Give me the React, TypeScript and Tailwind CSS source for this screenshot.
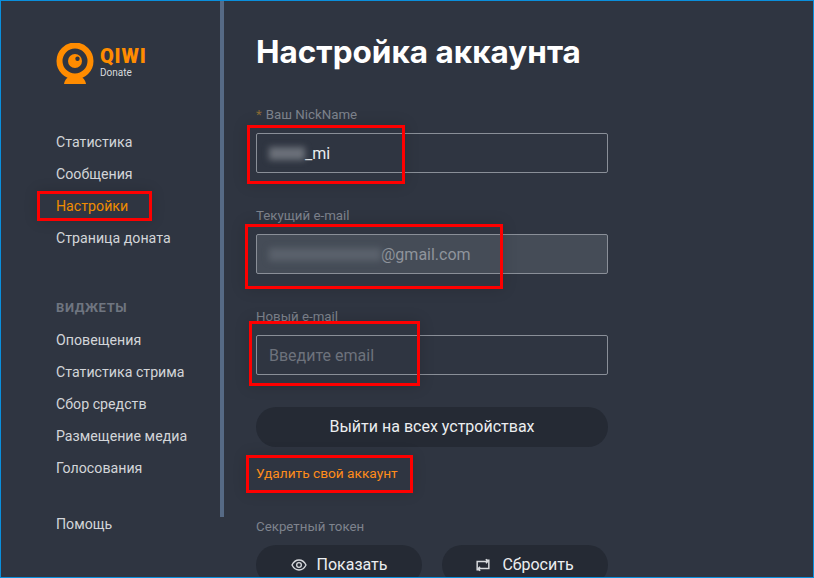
import React from "react";

const NavItem = ({ label, active }: { label: string; active?: boolean }) => (
  <div className={`h-8 flex items-center text-[14.200px] font-normal ${active ? "text-[#f08c00]" : "text-[#d3d5d9]"}`}>{label}</div>
);

const Field = ({ label, children, className }: { label: React.ReactNode; children: React.ReactNode; className?: string }) => (
  <div className={className}>
    <div className="h-5 mb-[9px] pt-px flex items-center text-[13.300px] font-normal text-[#7e838d]">{label}</div>
    {children}
  </div>
);

const Annot = ({ className }: { className: string }) => (
  <div className={`absolute border-[3px] border-[#fe0000] shadow-[0_0_14px_rgba(0,0,0,0.15)] ${className}`} />
);

const Pill = ({ children, className }: { children: React.ReactNode; className: string }) => (
  <div className={`h-10 rounded-[20px] bg-[#252a34] flex items-center justify-center text-[16px] text-[#eceef0] ${className}`}>{children}</div>
);

export default function App() {
  return (
    <div className="relative w-[814px] h-[578px] overflow-hidden bg-[#2f3541] border border-[#0a8fdc] flex font-['Roboto','Noto_Sans',sans-serif]">
      <aside className="w-[219px] shrink-0 pl-[55px] flex flex-col">
        <div className="mt-[42px] flex items-start h-[41px]">
          <svg width="38" height="41" viewBox="0 0 38 41" className="shrink-0">
            <path d="M8 41 C9 35 13 33 19 33 C25 33 29 35 30 41 Z" fill="#ff8c00" />
            <circle cx="19" cy="18" r="15.500" fill="none" stroke="#ff8c00" strokeWidth="6" />
            <circle cx="19" cy="18" r="7" fill="#ff8c00" />
            <circle cx="21.500" cy="15.800" r="2.200" fill="#2f3541" />
          </svg>
          <div className="ml-[6px] flex flex-col">
            <span className="text-[20px] leading-[17px] mt-[5px] font-black tracking-[0.8px] text-[#ff8c00]">QIWI</span>
            <span className="text-[10px] leading-[11px] mt-[2px] text-[#d8dade]">Donate</span>
          </div>
        </div>
        <nav className="mt-[43px] flex flex-col">
          <NavItem label="Статистика" />
          <NavItem label="Сообщения" />
          <NavItem label="Настройки" active />
          <NavItem label="Страница доната" />
        </nav>
        <div className="mt-[37px] h-8 flex items-center text-[13px] font-bold tracking-[0.6px] text-[#6f7580]">ВИДЖЕТЫ</div>
        <nav className="mt-px flex flex-col">
          <NavItem label="Оповещения" />
          <NavItem label="Статистика стрима" />
          <NavItem label="Сбор средств" />
          <NavItem label="Размещение медиа" />
          <NavItem label="Голосования" />
        </nav>
        <div className="mt-6">
          <NavItem label="Помощь" />
        </div>
      </aside>
      <div className="w-1 h-[516px] shrink-0 bg-[#566a85]" />
      <main className="ml-[32px] w-[352px] shrink-0">
        <h1 className="mt-[30px] h-[41px] flex items-center font-['Inter',sans-serif] text-[31.500px] font-bold text-white whitespace-nowrap">Настройка аккаунта</h1>
        <Field className="mt-[32px]" label={<><span className="text-[#8a6a35] mr-1">*</span>Ваш NickName</>}>
          <div className="h-10 border border-[#8a8f98] rounded-[2px] flex items-center px-3 pt-px text-[16px] text-[#eceef0]">
            <span className="w-9 h-[13px] bg-[#6b7079] blur-[3px]" />
            <span>_mi</span>
          </div>
        </Field>
        <Field className="mt-[32px]" label="Текущий e-mail">
          <div className="h-10 border border-[#8a8f98] rounded-[2px] bg-[#454c57] flex items-center pl-3 pt-px text-[16px] text-[#8f949c]">
            <span className="w-[112px] h-[13px] bg-[#5a616b] blur-[3px]" />
            <span>@gmail.com</span>
          </div>
        </Field>
        <Field className="mt-[32px]" label="Новый e-mail">
          <div className="h-10 border border-[#8a8f98] rounded-[2px] flex items-center px-3 pt-px text-[16px] text-[#6d727c]">Введите email</div>
        </Field>
        <Pill className="mt-[32px]">Выйти на всех устройствах</Pill>
        <div className="mt-[16px] h-5 flex items-center text-[13.700px] font-normal text-[#ff8c1a]">Удалить свой аккаунт</div>
        <div className="mt-[33px] h-5 mb-[9px] pt-px flex items-center text-[13.300px] font-normal text-[#7e838d]">Секретный токен</div>
        <div className="flex gap-5">
          <Pill className="flex-1 gap-[10px]">
            <svg width="16" height="16" viewBox="0 0 24 24" fill="none" stroke="#d8dade" strokeWidth="2"><path d="M1.500 12C4 7 7.500 4.500 12 4.500S20 7 22.500 12C20 17 16.500 19.500 12 19.500S4 17 1.500 12Z" /><circle cx="12" cy="12" r="3.500" /></svg>
            Показать
          </Pill>
          <Pill className="flex-1 gap-3">
            <svg width="14" height="14" viewBox="0 0 24 24" fill="none" stroke="#d8dade" strokeWidth="2.500"><path d="M6 20H2V6H20" /><path d="M18 4H22V18H4" /><path d="M17 2L20 6L17 9" /><path d="M7 15L4 18L7 22" /></svg>
            Сбросить
          </Pill>
        </div>
      </main>
      <Annot className="left-[36px] top-[190px] w-[115px] h-[30px]" />
      <Annot className="left-[246px] top-[124px] w-[158px] h-[59px]" />
      <Annot className="left-[244px] top-[223px] w-[258px] h-[65px]" />
      <Annot className="left-[248px] top-[320px] w-[171px] h-[65px]" />
      <Annot className="left-[245px] top-[454px] w-[167px] h-[38px]" />
    </div>
  );
}
